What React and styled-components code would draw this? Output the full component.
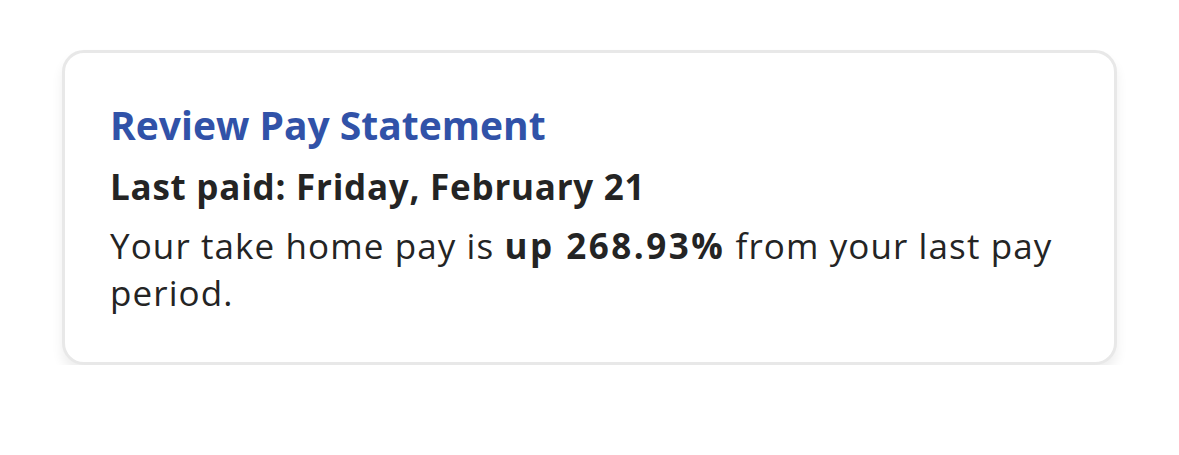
import React from "react";
import styled, { createGlobalStyle } from "styled-components";

const Global = createGlobalStyle`
  html, body { margin: 0; padding: 0; background: #ffffff; }
  body { font-family: "Open Sans", "Noto Sans", sans-serif; }
`;

const Page = styled.div`
  padding: 50px 62px 0 62px;
  width: 1179px;
  box-sizing: border-box;
`;

const Card = styled.section`
  box-sizing: border-box;
  width: 1055px;
  height: 315px;
  border: 3px solid #e8e8e8;
  border-radius: 22px;
  background: #ffffff;
  box-shadow: 0 8px 12px rgba(0, 0, 0, 0.07);
  padding: 47px 30px 0 45px;
  display: flex;
  flex-direction: column;
`;

const Title = styled.h2`
  margin: 0;
  font-family: "Open Sans", sans-serif;
  font-weight: 700;
  font-size: 39px;
  line-height: 50px;
  color: #3152a8;
  letter-spacing: 0px;
`;

const Subtitle = styled.div`
  margin-top: 12px;
  font-family: "Open Sans", sans-serif;
  font-weight: 700;
  font-size: 35px;
  line-height: 50px;
  color: #242424;
  letter-spacing: 0.75px;
`;

const Body = styled.p`
  margin: 10px 0 0 0;
  font-family: "Open Sans", sans-serif;
  font-weight: 400;
  font-size: 35px;
  line-height: 47px;
  color: #242424;
  letter-spacing: 1.1px;
`;

const Strong = styled.strong`
  font-weight: 700;
  letter-spacing: 2.5px;
`;

export default function App() {
  return (
    <>
      <Global />
      <Page>
        <Card>
          <Title>Review Pay Statement</Title>
          <Subtitle>Last paid: Friday, February 21</Subtitle>
          <Body>
            Your take home pay is <Strong>up 268.93%</Strong> from your last pay
            period.
          </Body>
        </Card>
      </Page>
    </>
  );
}
